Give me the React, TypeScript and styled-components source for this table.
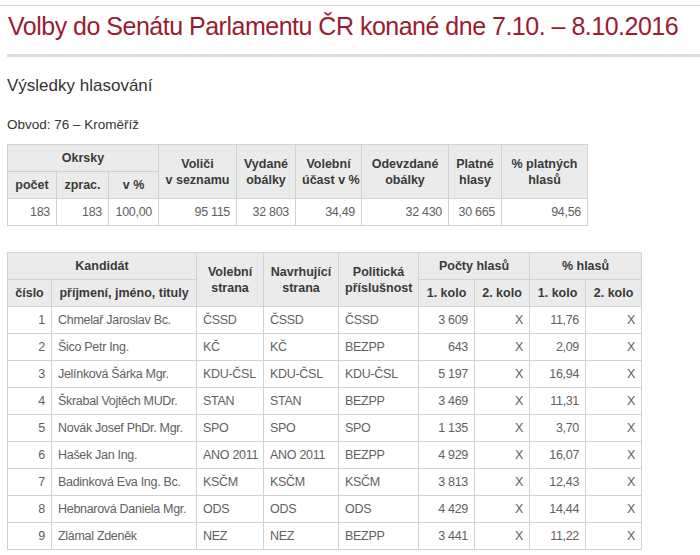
import React from 'react'
import styled, { createGlobalStyle } from 'styled-components'

const Global = createGlobalStyle`
  body {
    margin: 0;
    background: #fff;
    font-family: "Liberation Sans", Arial, sans-serif;
  }
`

const Page = styled.div`
  border-top: 1px solid #d6d6d6;
  margin-top: 5px;
  padding: 0 0 0 7px;
`

const Title = styled.h1`
  margin: 0;
  padding: 6px 0 0 1px;
  height: 42px;
  font-weight: normal;
  font-size: 25px;
  letter-spacing: -0.5px;
  color: #9b1c31;
  border-bottom: 3px solid #dcdcdc;
  white-space: nowrap;
`

const Subtitle = styled.h2`
  margin: 0;
  padding: 19px 0 0 0;
  height: 32px;
  font-weight: normal;
  font-size: 17px;
  color: #333;
`

const District = styled.p`
  margin: 0;
  padding: 9px 0 0 0;
  height: 27px;
  font-size: 13.5px;
  color: #333;
`

const Table = styled.table<{ $width: number; $mb?: number }>`
  border-collapse: collapse;
  table-layout: fixed;
  width: ${p => p.$width}px;
  font-size: 12.5px;
  margin-bottom: ${p => p.$mb ?? 0}px;
  th, td {
    border: 1px solid #d2d2d2;
    height: 26px;
    padding: 0 6px;
    overflow: hidden;
    white-space: nowrap;
  }
`

const Th = styled.th`
  background: #ebebeb;
  color: #3a3a3a;
  font-weight: bold;
  text-align: center;
  line-height: 16px;
`

const Td = styled.td<{ $left?: boolean }>`
  color: #616161;
  font-size: 12.5px;
  letter-spacing: -0.3px;
  text-align: ${p => (p.$left ? 'left' : 'right')};
`

const summaryCols = [49, 52, 50, 78, 59, 66, 87, 53, 86]
const resultCols = [44, 145, 67, 75, 80, 56, 55, 56, 56]

const candidates = [
  ['1', 'Chmelař Jaroslav Bc.', 'ČSSD', 'ČSSD', 'ČSSD', '3 609', '11,76'],
  ['2', 'Šico Petr Ing.', 'KČ', 'KČ', 'BEZPP', '643', '2,09'],
  ['3', 'Jelínková Šárka Mgr.', 'KDU-ČSL', 'KDU-ČSL', 'KDU-ČSL', '5 197', '16,94'],
  ['4', 'Škrabal Vojtěch MUDr.', 'STAN', 'STAN', 'BEZPP', '3 469', '11,31'],
  ['5', 'Novák Josef PhDr. Mgr.', 'SPO', 'SPO', 'SPO', '1 135', '3,70'],
  ['6', 'Hašek Jan Ing.', 'ANO 2011', 'ANO 2011', 'BEZPP', '4 929', '16,07'],
  ['7', 'Badinková Eva Ing. Bc.', 'KSČM', 'KSČM', 'KSČM', '3 813', '12,43'],
  ['8', 'Hebnarová Daniela Mgr.', 'ODS', 'ODS', 'ODS', '4 429', '14,44'],
  ['9', 'Zlámal Zdeněk', 'NEZ', 'NEZ', 'BEZPP', '3 441', '11,22'],
]

export default function App() {
  return (
    <>
      <Global />
      <Page>
        <Title>Volby do Senátu Parlamentu ČR konané dne 7.10. – 8.10.2016</Title>
        <Subtitle>Výsledky hlasování</Subtitle>
        <District>Obvod: 76 – Kroměříž</District>

        <Table $width={581} $mb={26}>
          <colgroup>
            {summaryCols.map((w, i) => <col key={i} style={{ width: w }} />)}
          </colgroup>
          <thead>
            <tr>
              <Th colSpan={3}>Okrsky</Th>
              <Th rowSpan={2}>Voliči<br />v seznamu</Th>
              <Th rowSpan={2}>Vydané<br />obálky</Th>
              <Th rowSpan={2}>Volební<br />účast v %</Th>
              <Th rowSpan={2}>Odevzdané<br />obálky</Th>
              <Th rowSpan={2}>Platné<br />hlasy</Th>
              <Th rowSpan={2}>% platných<br />hlasů</Th>
            </tr>
            <tr>
              <Th>počet</Th>
              <Th>zprac.</Th>
              <Th>v %</Th>
            </tr>
          </thead>
          <tbody>
            <tr>
              <Td>183</Td>
              <Td>183</Td>
              <Td>100,00</Td>
              <Td>95 115</Td>
              <Td>32 803</Td>
              <Td>34,49</Td>
              <Td>32 430</Td>
              <Td>30 665</Td>
              <Td>94,56</Td>
            </tr>
          </tbody>
        </Table>

        <Table $width={635}>
          <colgroup>
            {resultCols.map((w, i) => <col key={i} style={{ width: w }} />)}
          </colgroup>
          <thead>
            <tr>
              <Th colSpan={2}>Kandidát</Th>
              <Th rowSpan={2}>Volební<br />strana</Th>
              <Th rowSpan={2}>Navrhující<br />strana</Th>
              <Th rowSpan={2}>Politická<br />příslušnost</Th>
              <Th colSpan={2}>Počty hlasů</Th>
              <Th colSpan={2}>% hlasů</Th>
            </tr>
            <tr>
              <Th>číslo</Th>
              <Th>příjmení, jméno, tituly</Th>
              <Th>1. kolo</Th>
              <Th>2. kolo</Th>
              <Th>1. kolo</Th>
              <Th>2. kolo</Th>
            </tr>
          </thead>
          <tbody>
            {candidates.map(c => (
              <tr key={c[0]}>
                <Td>{c[0]}</Td>
                <Td $left>{c[1]}</Td>
                <Td $left>{c[2]}</Td>
                <Td $left>{c[3]}</Td>
                <Td $left>{c[4]}</Td>
                <Td>{c[5]}</Td>
                <Td>X</Td>
                <Td>{c[6]}</Td>
                <Td>X</Td>
              </tr>
            ))}
          </tbody>
        </Table>
      </Page>
    </>
  )
}
